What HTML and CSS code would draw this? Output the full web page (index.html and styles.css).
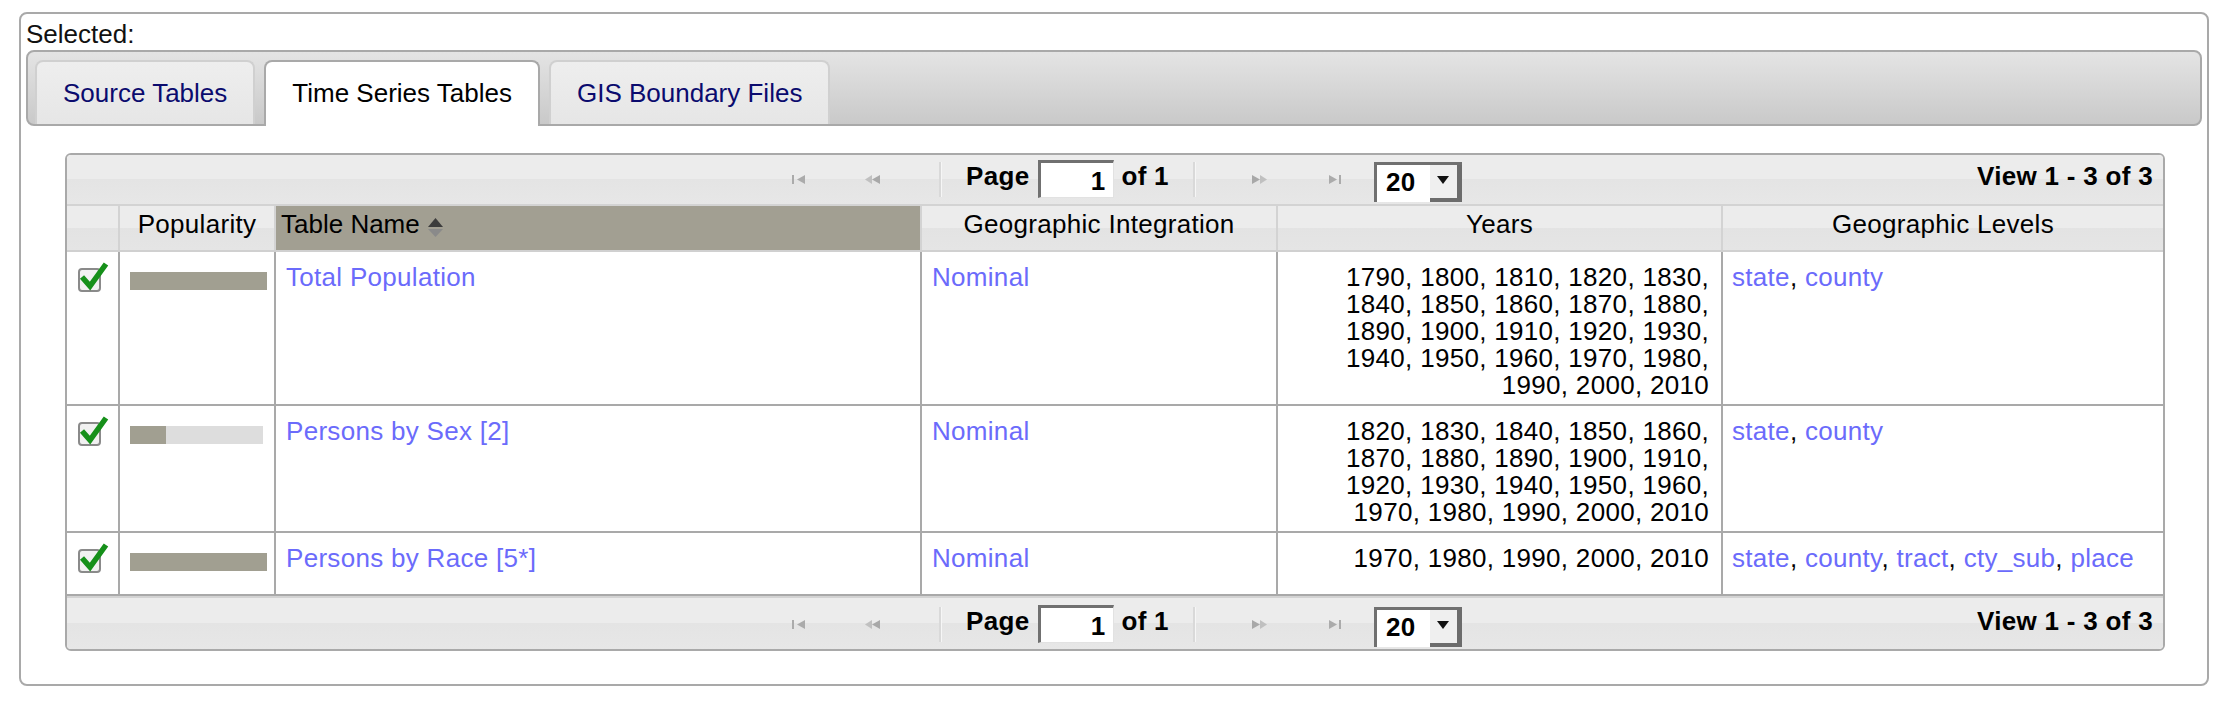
FILE: index.html
```html
<!DOCTYPE html>
<html lang="en">
<head>
<meta charset="utf-8">
<title>Selected</title>
<link rel="stylesheet" href="styles.css">
</head>
<body>
<div class="selected-box">
  <div class="selected-label">Selected:</div>
  <ul class="tab-nav">
    <li class="tab">Source Tables</li>
    <li class="tab active">Time Series Tables</li>
    <li class="tab">GIS Boundary Files</li>
  </ul>
  <div class="panel">
    <div class="grid">
      <div class="pager top">
        <div></div>
        <div class="pg-center">
          <span class="pg-icon first"><svg width="14" height="9" viewBox="0 0 14 9"><rect x="0" y="0" width="2" height="9" fill="#ababab"/><polygon points="13,0 13,9 5,4.5" fill="#ababab"/></svg></span>
          <span class="pg-icon prev"><svg width="15" height="9" viewBox="0 0 15 9"><polygon points="7,0 7,9 0,4.5" fill="#c0c0c0"/><polygon points="15,0 15,9 7,4.5" fill="#a8a8a8"/></svg></span>
          <span class="pg-sep"></span>
          <span class="pg-text page">Page</span>
          <span class="pg-input">1</span>
          <span class="pg-text of">of 1</span>
          <span class="pg-sep sep2"></span>
          <span class="pg-icon next"><svg width="22" height="9" viewBox="0 0 22 9"><polygon points="4,0 4,9 12,4.5" fill="#a8a8a8"/><polygon points="12,0 12,9 19,4.5" fill="#c0c0c0"/></svg></span>
          <span class="pg-icon last"><svg width="18" height="9" viewBox="0 0 18 9"><polygon points="3,0 3,9 11,4.5" fill="#ababab"/><rect x="13" y="0" width="2" height="9" fill="#ababab"/></svg></span>
          <span class="pg-select"><span class="val">20</span><span class="btn"><svg width="12" height="8" viewBox="0 0 12 8"><polygon points="0,0 12,0 6,8" fill="#111"/></svg></span></span>
        </div>
        <div class="pg-right">View 1 - 3 of 3</div>
      </div>

      <div class="row head">
        <div class="hc"></div>
        <div class="hc">Popularity</div>
        <div class="hc sorted">Table Name<svg class="sort" width="15" height="19" viewBox="0 0 15 19"><polygon points="7.5,0 15,9 0,9" fill="#3c3c3c"/><polygon points="0,11 15,11 7.5,19" fill="#8a8a8a"/></svg></div>
        <div class="hc">Geographic Integration</div>
        <div class="hc">Years</div>
        <div class="hc last">Geographic Levels</div>
      </div>

      <div class="row">
        <div class="c chk"><svg width="31" height="31" viewBox="0 0 31 31"><rect x="1" y="7" width="21" height="22" rx="3" fill="#f1f1f1" stroke="#8a8a8a" stroke-width="2"/><path d="M4 15 L12 24 L28 2" fill="none" stroke="#16901a" stroke-width="5.5"/></svg></div>
        <div class="c pop"><span class="pop-track"><span class="pop-fill" style="width:137px"></span></span></div>
        <div class="c"><a class="lnk">Total Population</a></div>
        <div class="c"><a class="lnk">Nominal</a></div>
        <div class="c years">1790, 1800, 1810, 1820, 1830, 1840, 1850, 1860, 1870, 1880, 1890, 1900, 1910, 1920, 1930, 1940, 1950, 1960, 1970, 1980, 1990, 2000, 2010</div>
        <div class="c last"><a class="lnk">state</a>, <a class="lnk">county</a></div>
      </div>

      <div class="row">
        <div class="c chk"><svg width="31" height="31" viewBox="0 0 31 31"><rect x="1" y="7" width="21" height="22" rx="3" fill="#f1f1f1" stroke="#8a8a8a" stroke-width="2"/><path d="M4 15 L12 24 L28 2" fill="none" stroke="#16901a" stroke-width="5.5"/></svg></div>
        <div class="c pop"><span class="pop-track"><span class="pop-fill" style="width:36px"></span></span></div>
        <div class="c"><a class="lnk">Persons by Sex [2]</a></div>
        <div class="c"><a class="lnk">Nominal</a></div>
        <div class="c years">1820, 1830, 1840, 1850, 1860, 1870, 1880, 1890, 1900, 1910, 1920, 1930, 1940, 1950, 1960, 1970, 1980, 1990, 2000, 2010</div>
        <div class="c last"><a class="lnk">state</a>, <a class="lnk">county</a></div>
      </div>

      <div class="row">
        <div class="c chk"><svg width="31" height="31" viewBox="0 0 31 31"><rect x="1" y="7" width="21" height="22" rx="3" fill="#f1f1f1" stroke="#8a8a8a" stroke-width="2"/><path d="M4 15 L12 24 L28 2" fill="none" stroke="#16901a" stroke-width="5.5"/></svg></div>
        <div class="c pop"><span class="pop-track"><span class="pop-fill" style="width:137px"></span></span></div>
        <div class="c"><a class="lnk">Persons by Race [5*]</a></div>
        <div class="c"><a class="lnk">Nominal</a></div>
        <div class="c years">1970, 1980, 1990, 2000, 2010</div>
        <div class="c last"><a class="lnk">state</a>, <a class="lnk">county</a>, <a class="lnk">tract</a>, <a class="lnk">cty_sub</a>, <a class="lnk">place</a></div>
      </div>

      <div class="pager bottom">
        <div></div>
        <div class="pg-center">
          <span class="pg-icon first"><svg width="14" height="9" viewBox="0 0 14 9"><rect x="0" y="0" width="2" height="9" fill="#ababab"/><polygon points="13,0 13,9 5,4.5" fill="#ababab"/></svg></span>
          <span class="pg-icon prev"><svg width="15" height="9" viewBox="0 0 15 9"><polygon points="7,0 7,9 0,4.5" fill="#c0c0c0"/><polygon points="15,0 15,9 7,4.5" fill="#a8a8a8"/></svg></span>
          <span class="pg-sep"></span>
          <span class="pg-text page">Page</span>
          <span class="pg-input">1</span>
          <span class="pg-text of">of 1</span>
          <span class="pg-sep sep2"></span>
          <span class="pg-icon next"><svg width="22" height="9" viewBox="0 0 22 9"><polygon points="4,0 4,9 12,4.5" fill="#a8a8a8"/><polygon points="12,0 12,9 19,4.5" fill="#c0c0c0"/></svg></span>
          <span class="pg-icon last"><svg width="18" height="9" viewBox="0 0 18 9"><polygon points="3,0 3,9 11,4.5" fill="#ababab"/><rect x="13" y="0" width="2" height="9" fill="#ababab"/></svg></span>
          <span class="pg-select"><span class="val">20</span><span class="btn"><svg width="12" height="8" viewBox="0 0 12 8"><polygon points="0,0 12,0 6,8" fill="#111"/></svg></span></span>
        </div>
        <div class="pg-right">View 1 - 3 of 3</div>
      </div>
    </div>
  </div>
</div>
</body>
</html>
```
FILE: styles.css
```css
* { box-sizing: border-box; }

body {
  margin: 12px 19px;
  background: #fff;
  color: #000;
  font-family: "Liberation Sans", Arial, sans-serif;
  font-size: 26px;
  line-height: 28px;
}

.selected-box {
  border: 2px solid #a9a9a9;
  border-radius: 8px;
  padding: 6px 5px 0;
}

.selected-label {
  height: 28px;
  margin-bottom: 2px;
  color: #111;
}

/* tabs */
.tab-nav {
  display: flex;
  align-items: flex-start;
  height: 76px;
  margin: 0;
  padding: 8px 7px 0;
  list-style: none;
  border: 2px solid #a9a9a9;
  border-radius: 8px;
  background: linear-gradient(to bottom, #e4e4e4, #c9c9c9);
}

.tab {
  height: 64px;
  margin-right: 9px;
  padding: 17px 26px;
  border: 2px solid #d0d0d0;
  border-bottom: 0;
  border-radius: 8px 8px 0 0;
  background: linear-gradient(to bottom, #eeeeee, #e6e6e6);
  color: #0b0b6e;
  white-space: nowrap;
}

.tab.active {
  height: 66px;
  padding-bottom: 19px;
  border-color: #a9a9a9;
  background: #fff;
  color: #000;
}

/* panel */
.panel {
  padding: 27px 37px 33px 39px;
}

.grid {
  border: 2px solid #a9a9a9;
  border-radius: 6px;
  overflow: hidden;
  letter-spacing: 0.3px;
}

/* pager */
.pager {
  display: grid;
  grid-template-columns: 1fr auto 1fr;
  align-items: start;
  height: 51px;
  border-bottom: 2px solid #d3d3d3;
  background: linear-gradient(to bottom, #ececec 0, #ececec 50%, #e4e4e4 50%, #e7e7e7 100%);
}

.pager.bottom {
  height: 53px;
  padding-top: 2px;
  border-bottom: 0;
  border-top: 2px solid #d3d3d3;
}

.pg-center {
  display: flex;
  align-items: flex-start;
  margin-left: 24px;
}

.pg-icon {
  display: block;
  height: 9px;
  margin-top: 20px;
}
.pg-icon svg { display: block; }
.pg-icon.prev { margin-left: 59px; }
.pg-icon.next { margin-left: 52px; }
.pg-icon.last { margin-left: 56px; }

.pg-sep {
  display: block;
  width: 3px;
  height: 35px;
  margin-top: 7px;
  margin-left: 59px;
  border-left: 2px solid #d9d9d9;
  border-right: 1px solid #f6f6f6;
}
.pg-sep.sep2 { margin-left: 24px; }

.pg-text {
  margin-top: 7px;
  font-weight: bold;
  white-space: nowrap;
}
.pg-text.page { margin-left: 24px; }
.pg-text.of { margin-left: 7px; }

.pg-input {
  display: block;
  width: 76px;
  height: 38px;
  margin-top: 5px;
  margin-left: 9px;
  padding: 4px 8px 0 0;
  border-top: 3px solid #707070;
  border-left: 3px solid #707070;
  border-right: 1px solid #e2e2e2;
  border-bottom: 1px solid #e2e2e2;
  background: #fff;
  text-align: right;
  font-weight: bold;
}

.pg-select {
  display: flex;
  width: 88px;
  height: 40px;
  margin-top: 7px;
  margin-left: 30px;
  border-top: 3px solid #707070;
  border-left: 3px solid #707070;
  background: #fff;
  font-weight: bold;
}
.pg-select .val {
  padding: 3px 0 0 9px;
}
.pg-select .btn {
  display: flex;
  align-items: center;
  justify-content: center;
  width: 32px;
  height: 37px;
  margin-left: auto;
  border-right: 5px solid #6c6c6c;
  border-bottom: 4px solid #6c6c6c;
  background: #efefef;
}
.pg-select .btn svg { display: block; margin-top: -4px; }

.pg-right {
  justify-self: end;
  margin-top: 7px;
  padding-right: 10px;
  font-weight: bold;
  white-space: nowrap;
}

/* rows */
.row {
  display: grid;
  grid-template-columns: 53px 156px 646px 356px 445px 1fr;
  border-bottom: 2px solid #a9a9a9;
  min-height: 63px;
  line-height: 27px;
}

.row.head {
  height: 46px;
  min-height: 0;
  line-height: 28px;
  border-bottom: 2px solid #d0d0d0;
  background: linear-gradient(to bottom, #ececec 0, #ececec 50%, #e3e3e3 50%, #e5e5e5 100%);
}

.hc {
  display: flex;
  justify-content: center;
  padding-top: 4px;
  border-right: 2px solid #d3d3d3;
  white-space: nowrap;
}
.hc.sorted {
  justify-content: flex-start;
  padding-left: 5px;
  background: #a29f92;
  letter-spacing: 0;
}
.hc .sort {
  display: block;
  margin: 8px 0 0 8px;
}
.hc.last { border-right: 0; }

.c {
  padding: 12px 9px 5px 10px;
  border-right: 2px solid #a9a9a9;
}
.c.last { border-right: 0; padding-left: 9px; }

.c.chk { padding: 10px 0 0 11px; }
.c.chk svg { display: block; }

.c.pop { padding: 20px 0 0 10px; }
.pop-track {
  display: block;
  width: 133px;
  height: 18px;
  background: #dddddd;
}
.pop-fill {
  display: block;
  height: 18px;
  background: #a19f91;
}

.c.years {
  padding: 12px 12px 5px 20px;
  text-align: right;
}

.lnk {
  color: #6b6bfb;
  text-decoration: none;
  cursor: pointer;
}
```
